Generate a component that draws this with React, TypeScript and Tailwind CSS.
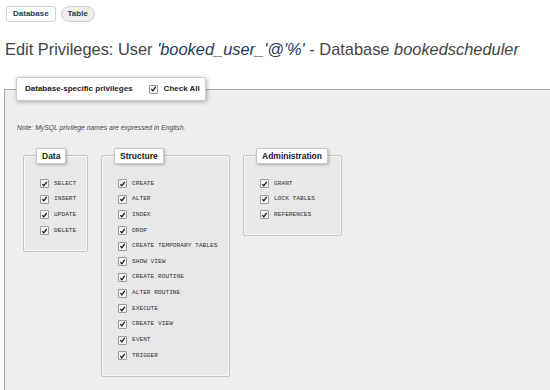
import React from "react";

const groups = [
  { title: "Data", width: "w-[65px]", height: "h-[97px]", items: ["SELECT", "INSERT", "UPDATE", "DELETE"] },
  {
    title: "Structure",
    width: "w-[129px]",
    height: "h-[222px]",
    items: [
      "CREATE",
      "ALTER",
      "INDEX",
      "DROP",
      "CREATE TEMPORARY TABLES",
      "SHOW VIEW",
      "CREATE ROUTINE",
      "ALTER ROUTINE",
      "EXECUTE",
      "CREATE VIEW",
      "EVENT",
      "TRIGGER",
    ],
  },
  { title: "Administration", width: "w-[99px]", height: "h-[81px]", items: ["GRANT", "LOCK TABLES", "REFERENCES"] },
];

function Check() {
  return (
    <span className="flex h-[9px] w-[9px] shrink-0 items-center justify-center rounded-[1px] border border-[#9a9a9a] bg-[#f4f4f4]">
      <svg viewBox="0 0 10 10" className="h-[8px] w-[8px]">
        <path d="M2 5.2 L4 7.6 L8.2 2" fill="none" stroke="#111" strokeWidth="1.8" />
      </svg>
    </span>
  );
}

function Group({ title, width, height, items }: { title: string; width: string; height: string; items: string[] }) {
  return (
    <div className={`relative ${width} ${height} rounded-[2px] border border-[#c4c4c4] bg-[#e8e8e8] shadow-[inset_0_0_0_1px_#f6f6f6]`}>
      <div className="absolute left-[12px] top-[-8px] whitespace-nowrap rounded-[2px] border border-[#c8c8c8] bg-white px-[5px] text-[8.5px] font-bold leading-[14px] text-[#222] shadow-[1px_1px_3px_rgba(0,0,0,0.25)]">
        {title}
      </div>
      <div className="flex flex-col gap-[6.65px] pl-[16px] pt-[23px]">
        {items.map((it) => (
          <div key={it} className="flex h-[9px] items-center gap-[5px]">
            <Check />
            <span className="whitespace-pre font-['Liberation_Mono',monospace] text-[6.2px] leading-none text-[#333]">
              {it}
            </span>
          </div>
        ))}
      </div>
    </div>
  );
}

export default function App() {
  return (
    <div className="h-[390px] w-[550px] overflow-hidden bg-white font-['Liberation_Sans',Arial,sans-serif] text-[#444]">
      {/* tabs */}
      <div className="flex gap-[5px] pl-[6px] pt-[6px]">
        <span className="flex h-[16px] items-center rounded-[3px] border border-[#d0d0d0] bg-white px-[6px] text-[8px] font-bold text-[#1f3a5a]">
          Database
        </span>
        <span className="flex h-[16px] items-center rounded-full border border-[#d0d0d0] bg-[#eee] px-[6px] text-[8px] font-bold text-[#1f3a5a]">
          Table
        </span>
      </div>

      <h2 className="mt-[17px] whitespace-nowrap pl-[5px] text-[16.4px] leading-[20px] text-[#444]">
        Edit Privileges: User <i className="text-[#1f3a5a]">'booked_user_'@'%'</i> - Database <i>bookedscheduler</i>
      </h2>

      {/* main fieldset */}
      <div className="relative ml-[4px] mt-[30px] h-[320px] w-[560px] border border-[#aaa] bg-[#eee] pl-[18px]">
        <div className="absolute left-[11px] top-[-13px] flex h-[24px] w-[190px] items-center whitespace-nowrap rounded-[2px] border border-[#ccc] bg-white pl-[8px] text-[8px] font-bold text-[#222] shadow-[1px_1px_4px_rgba(0,0,0,0.3)]">
          <span>Database-specific privileges</span>
          <span className="ml-[16px] flex items-center gap-[6px]">
            <Check />
            <span>Check All</span>
          </span>
        </div>

        <p className="-ml-[6px] pt-[33px] text-[6.8px] italic text-[#444]">
          Note: MySQL privilege names are expressed in English.
        </p>

        <div className="mt-[22px] flex items-start gap-[13px]">
          {groups.map((g) => (
            <Group key={g.title} {...g} />
          ))}
        </div>
      </div>
    </div>
  );
}
